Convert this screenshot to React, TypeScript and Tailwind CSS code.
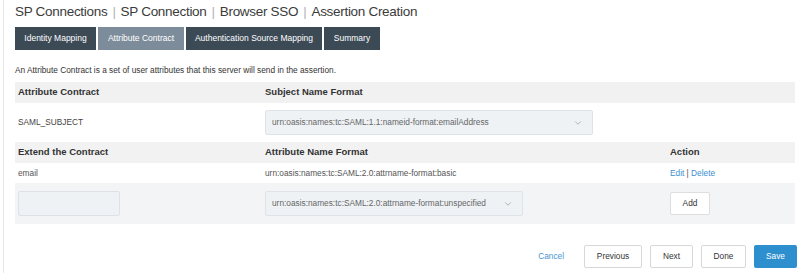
import { ChevronDown } from "lucide-react";

const tabs = [
  { label: "Identity Mapping", width: "w-[81px]", active: false },
  { label: "Attribute Contract", width: "w-[86px]", active: true },
  { label: "Authentication Source Mapping", width: "w-[136px]", active: false },
  { label: "Summary", width: "w-[56px]", active: false }
];

function Crumbs() {
  const parts = ["SP Connections", "SP Connection", "Browser SSO", "Assertion Creation"];
  return (
    <h1 className="flex h-[16px] items-center text-[13.5px] leading-[16px] tracking-[-0.3px] text-[#3b3b3b]">
      {parts.map((part, index) => (
        <span key={part} className="flex items-center">
          {index > 0 ? <span className="mx-[5px] text-[#b5b5b5] font-light">|</span> : null}
          {part}
        </span>
      ))}
    </h1>
  );
}

function SelectBox({ value, width }: { value: string; width: string }) {
  return (
    <div
      className={`flex h-[25px] items-center justify-between rounded-[2px] border border-[#dde3e8] bg-[#eef2f5] pl-[6px] pr-[9px] text-[8.3px] text-[#666] ${width}`}
    >
      <span>{value}</span>
      <ChevronDown size={10} strokeWidth={1.5} className="text-[#8a8f94]" />
    </div>
  );
}

export default function App() {
  return (
    <div className="h-[273px] w-[800px] overflow-hidden bg-white font-['Liberation_Sans',Arial,sans-serif]">
      <div className="ml-[3px] h-full border-l border-[#e8e8e8] pl-[11px] pr-[3px] pt-[4px]">
        <Crumbs />

        <div className="mt-[7px] flex gap-[2px]">
          {tabs.map((tab) => (
            <div
              key={tab.label}
              className={`flex h-[23px] items-center justify-center text-[8.5px] text-white ${tab.width} ${
                tab.active ? "bg-[#7d8c9a]" : "bg-[#3c4a56]"
              }`}
            >
              {tab.label}
            </div>
          ))}
        </div>

        <p className="mt-[15px] text-[8.3px] leading-[10px] text-[#333]">
          An Attribute Contract is a set of user attributes that this server will send in the assertion.
        </p>

        <div className="mr-[2px] mt-[7px] text-[#333]">
          <div className="grid h-[21px] grid-cols-[247px_405px_1fr] items-center bg-[#f1f1f1] text-[9.5px] font-bold">
            <span className="pl-[3px]">Attribute Contract</span>
            <span className="pl-[3px]">Subject Name Format</span>
            <span />
          </div>
          <div className="grid h-[39px] grid-cols-[247px_405px_1fr] items-center text-[8.3px] text-[#444]">
            <span className="pl-[3px]">SAML_SUBJECT</span>
            <div className="pl-[3px]">
              <SelectBox value="urn:oasis:names:tc:SAML:1.1:nameid-format:emailAddress" width="w-[328px]" />
            </div>
            <span />
          </div>

          <div className="grid h-[21px] grid-cols-[247px_405px_1fr] items-center bg-[#f2f2f2] text-[9.5px] font-bold">
            <span className="pl-[3px]">Extend the Contract</span>
            <span className="pl-[3px]">Attribute Name Format</span>
            <span className="pl-[3px]">Action</span>
          </div>
          <div className="grid h-[20px] grid-cols-[247px_405px_1fr] items-center text-[8.3px] text-[#555]">
            <span className="pl-[3px]">email</span>
            <span className="pl-[3px]">urn:oasis:names:tc:SAML:2.0:attrname-format:basic</span>
            <span className="pl-[3px]">
              <span className="text-[#3c8fd1]">Edit</span>
              <span className="text-[#555]"> | </span>
              <span className="text-[#3c8fd1]">Delete</span>
            </span>
          </div>
          <div className="grid h-[41px] grid-cols-[247px_405px_1fr] items-center bg-[#f3f4f6] text-[8.3px]">
            <div className="pl-[3px]">
              <input
                type="text"
                className="h-[25px] w-[102px] rounded-[2px] border border-[#dce2e7] bg-[#eef2f5] outline-none"
              />
            </div>
            <div className="pl-[3px]">
              <SelectBox value="urn:oasis:names:tc:SAML:2.0:attrname-format:unspecified" width="w-[258px]" />
            </div>
            <div className="pl-[3px]">
              <button
                type="button"
                className="h-[23px] w-[40px] rounded-[2px] border border-[#dedede] bg-white text-[8.3px] text-[#333]"
              >
                Add
              </button>
            </div>
          </div>
        </div>

        <div className="mt-[21px] flex items-center justify-end gap-[8px] text-[8.3px]">
          <button type="button" className="mr-[12px] text-[#4a95cf]">
            Cancel
          </button>
          <button type="button" className="h-[23px] w-[58px] rounded-[2px] border border-[#d8d8d8] bg-white text-[#333]">
            Previous
          </button>
          <button type="button" className="h-[23px] w-[43px] rounded-[2px] border border-[#d8d8d8] bg-white text-[#333]">
            Next
          </button>
          <button type="button" className="h-[23px] w-[45px] rounded-[2px] border border-[#d8d8d8] bg-white text-[#333]">
            Done
          </button>
          <button type="button" className="h-[23px] w-[43px] rounded-[2px] bg-[#2e8fcf] text-white">
            Save
          </button>
        </div>
      </div>
    </div>
  );
}
